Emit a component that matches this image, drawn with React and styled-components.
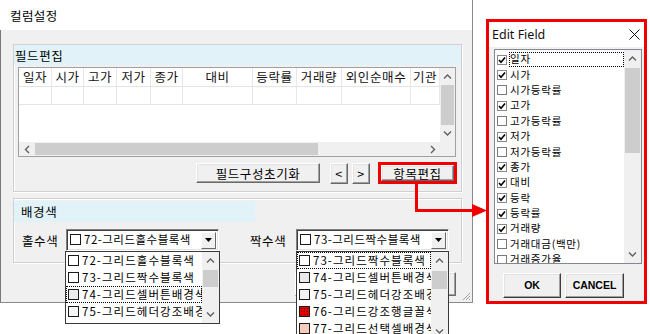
import React from "react";
import styled, { createGlobalStyle } from "styled-components";

const GlobalStyle = createGlobalStyle`
  html, body { margin: 0; padding: 0; background: #fff; }
  body {
    font-family: "Noto Sans CJK KR", "Noto Sans", sans-serif;
    font-size: 12.5px;
    letter-spacing: 0.6px;
    line-height: 1.2;
    color: #000;
  }
  * { box-sizing: border-box; }
`;

const RED = "#f00000";

const Canvas = styled.div`
  position: relative;
  width: 650px;
  height: 334px;
  overflow: hidden;
  display: flex;
  align-items: flex-start;
  background: #fff;
`;

/* ---------- main dialog ---------- */

const MainDialog = styled.div`
  width: 473px;
  height: 303px;
  display: flex;
  flex-direction: column;
  border-right: 1px solid #8a8a8a;
  border-bottom: 1px solid #8a8a8a;
  flex-shrink: 0;
`;

const TitleBar = styled.div`
  height: 30px;
  padding-left: 10px;
  display: flex;
  align-items: center;
  background: #fff;
  letter-spacing: 0.4px;
`;

const Body = styled.div`
  position: relative;
  flex: 1;
  background: #f0f0f0;
  border-left: 1px solid #7a7a7a;
  padding: 14px 10px 0 12px;
`;

const Group = styled.div`
  height: ${(p) => p.$height}px;
  margin-top: ${(p) => p.$top || 0}px;
  display: flex;
  flex-direction: column;
  border: 1px solid #d0d0d0;
  box-shadow: inset 1px 1px 0 #fff, 1px 1px 0 #fff;
`;

const Band = styled.div`
  height: ${(p) => p.$height}px;
  width: ${(p) => (p.$width ? `${p.$width}px` : "auto")};
  margin-top: ${(p) => p.$top || 0}px;
  padding-left: ${(p) => p.$indent}px;
  display: flex;
  align-items: center;
  background: #e1f3f8;
`;

const GridBox = styled.div`
  margin: 2px 5px 0 4px;
  height: 90px;
  border: 1px solid #a0a0a0;
  background: #fff;
  display: grid;
  grid-template-columns: 1fr 15px;
  grid-template-rows: 1fr 14px;
`;

const Table = styled.div`
  overflow: hidden;
`;

const Row = styled.div`
  display: flex;
  height: ${(p) => p.$height}px;
  border-bottom: 1px solid #e4e4e4;
`;

const Cell = styled.div`
  flex: 0 0 ${(p) => p.$w}px;
  border-right: 1px solid #e8e8e8;
  text-align: center;
  line-height: ${(p) => p.$height - 1}px;
  white-space: nowrap;
  overflow: hidden;
  color: #111;
`;

const Corner = styled.div`
  background: #f0f0f0;
`;

const ButtonRow = styled.div`
  display: flex;
  align-items: center;
  justify-content: flex-end;
  height: 22px;
  margin-top: ${(p) => p.$top}px;
  padding-right: ${(p) => p.$right}px;
`;

const ClassicButton = styled.button`
  width: ${(p) => p.$w}px;
  height: ${(p) => p.$h}px;
  margin-left: ${(p) => p.$ml || 0}px;
  padding: 0;
  font: inherit;
  letter-spacing: inherit;
  color: #000;
  background: #f0f0f0;
  border: 1px solid;
  border-color: #fff #696969 #696969 #fff;
  box-shadow: inset -1px -1px 0 #a0a0a0, inset 1px 1px 0 #e3e3e3;
  display: flex;
  align-items: center;
  justify-content: center;
  flex-shrink: 0;
`;

const Highlight = styled.div`
  width: 79px;
  height: 22px;
  margin-left: 8px;
  border: 3px solid ${RED};
  display: flex;
  position: relative;
  z-index: 2;
`;

const FieldRow = styled.div`
  display: flex;
  align-items: center;
  margin-top: 7px;
  padding-left: 8px;
`;

const FieldLabel = styled.div`
  width: ${(p) => p.$w}px;
  margin-left: ${(p) => p.$ml || 0}px;
  flex-shrink: 0;
`;

const Combo = styled.div`
  position: relative;
  width: 153px;
  height: 22px;
  display: flex;
  align-items: center;
  padding: 0 2px 0 3px;
  background: #fff;
  border: 1px solid;
  border-color: #808080 #fff #fff #808080;
  box-shadow: inset 1px 1px 0 #404040, inset -1px -1px 0 #e3e3e3;
  flex-shrink: 0;
  font-size: 11.5px;
  letter-spacing: 0.5px;
`;

const ComboText = styled.div`
  flex: 1;
  min-width: 0;
  display: flex;
  align-items: center;
  white-space: nowrap;
`;

const DropButton = styled.div`
  width: 15px;
  height: 17px;
  background: #f0f0f0;
  border: 1px solid;
  border-color: #fff #696969 #696969 #fff;
  display: flex;
  align-items: center;
  justify-content: center;
  flex-shrink: 0;
`;

const Swatch = styled.span`
  width: 11px;
  height: 11px;
  margin-right: 3px;
  border: 1px solid #1a1a1a;
  background-color: ${(p) => p.$color || "#fff"};
  background-image: ${(p) =>
    p.$dotted ? "radial-gradient(#6a0000 35%, transparent 40%)" : "none"};
  background-size: 3px 3px;
  flex-shrink: 0;
`;

const DropList = styled.div`
  position: absolute;
  top: calc(100% + 1px);
  left: ${(p) => p.$left}px;
  width: ${(p) => p.$w}px;
  height: ${(p) => p.$h}px;
  display: flex;
  background: #fff;
  border: 1px solid #3a3a3a;
  z-index: 5;
  letter-spacing: 1.05px;
`;

const DropItems = styled.div`
  flex: 1;
  min-width: 0;
  overflow: hidden;
`;

const DropItem = styled.div`
  height: 17px;
  display: flex;
  align-items: center;
  padding-left: 2px;
  white-space: nowrap;
  overflow: hidden;
  outline: ${(p) => (p.$focus ? "1px dotted #000" : "none")};
  outline-offset: -1px;
`;

const Grip = styled.svg`
  position: absolute;
  right: 1px;
  bottom: 1px;
`;

/* ---------- scrollbars ---------- */

const VBar = styled.div`
  width: ${(p) => p.$w}px;
  display: flex;
  flex-direction: column;
  background: #f0f0f0;
  flex-shrink: 0;
`;

const HBar = styled.div`
  display: flex;
  background: #f0f0f0;
`;

const BarArrow = styled.div`
  flex: 0 0 ${(p) => p.$size}px;
  display: flex;
  align-items: center;
  justify-content: center;
`;

const VThumb = styled.div`
  margin: ${(p) => p.$offset}px 1px 0;
  height: ${(p) => p.$size}px;
  background: #cdcdcd;
`;

const HThumb = styled.div`
  margin: 1px 0 1px ${(p) => p.$offset}px;
  width: ${(p) => p.$size}px;
  background: #cdcdcd;
`;

const Spacer = styled.div`
  flex: 1;
`;

const Chevron = ({ dir }) => {
  const vertical = dir === "up" || dir === "down";
  const pts = {
    up: "1,5.5 4.5,2 8,5.5",
    down: "1,1.5 4.5,5 8,1.5",
    left: "5,1 1.5,4.5 5,8",
    right: "2,1 5.5,4.5 2,8",
  }[dir];
  return (
    <svg
      width={vertical ? 9 : 7}
      height={vertical ? 7 : 9}
      viewBox={vertical ? "0 0 9 7" : "0 0 7 9"}
    >
      <polyline points={pts} fill="none" stroke="#606060" strokeWidth="1.4" />
    </svg>
  );
};

const VScroll = ({ width = 17, arrow = 17, offset, size }) => (
  <VBar $w={width}>
    <BarArrow $size={arrow}>
      <Chevron dir="up" />
    </BarArrow>
    <VThumb $offset={offset} $size={size} />
    <Spacer />
    <BarArrow $size={arrow}>
      <Chevron dir="down" />
    </BarArrow>
  </VBar>
);

const HScroll = ({ arrow = 16, offset, size }) => (
  <HBar>
    <BarArrow $size={arrow}>
      <Chevron dir="left" />
    </BarArrow>
    <HThumb $offset={offset} $size={size} />
    <Spacer />
    <BarArrow $size={arrow}>
      <Chevron dir="right" />
    </BarArrow>
  </HBar>
);

/* ---------- edit field dialog ---------- */

const EditDialog = styled.div`
  width: 161px;
  height: 285px;
  margin: 19px 0 0 13px;
  border: 3px solid ${RED};
  display: flex;
  flex-direction: column;
  background: #f0f0f0;
  flex-shrink: 0;
`;

const EditTitle = styled.div`
  height: 25px;
  padding: 0 4px 0 3px;
  display: flex;
  align-items: center;
  justify-content: space-between;
  background: #fff;
  font-family: "Noto Sans", "Open Sans", sans-serif;
  font-size: 12.5px;
  letter-spacing: 0;
  color: #111;
`;

const ListBox = styled.div`
  height: 215px;
  margin: 2px 2px 0 5px;
  display: flex;
  background: #fff;
  border: 1px solid #828790;
`;

const ListItems = styled.div`
  flex: 1;
  min-width: 0;
  padding-top: 2px;
  overflow: hidden;
`;

const ListItem = styled.div`
  height: 15.4px;
  display: flex;
  align-items: center;
  padding-left: 2px;
  font-size: 10.5px;
  letter-spacing: 0.75px;
  white-space: nowrap;
`;

const Check = styled.span`
  width: 10px;
  height: 10px;
  border: 1px solid ${(p) => (p.$on ? "#8a8a8a" : "#7a7a7a")};
  background: #fff;
  display: flex;
  align-items: center;
  justify-content: center;
  flex-shrink: 0;
`;

const ItemLabel = styled.span`
  flex: 1;
  margin-left: 2px;
  height: 15px;
  line-height: 14px;
  padding-left: 1px;
  outline: ${(p) => (p.$focus ? "1px dotted #000" : "none")};
  outline-offset: -1px;
`;

const DialogButtons = styled.div`
  display: flex;
  gap: 4px;
  margin-top: 9px;
  padding-left: 14px;
`;

const DialogButton = styled(ClassicButton)`
  font-family: "Liberation Sans", Arial, sans-serif;
  font-size: 10.5px;
  font-weight: 700;
  letter-spacing: 0;
  border-color: #fff #3c3c3c #3c3c3c #fff;
`;

const ArrowOverlay = styled.svg`
  position: absolute;
  left: 0;
  top: 0;
  pointer-events: none;
  z-index: 10;
`;

/* ---------- data ---------- */

const columns = [
  ["일자", 33],
  ["시가", 32],
  ["고가", 33],
  ["저가", 34],
  ["종가", 32],
  ["대비", 70],
  ["등락률", 44],
  ["거래량", 45],
  ["외인순매수", 69],
  ["기관", 29],
];

const oddColors = [
  { label: "72-그리드홀수블록색", color: "#fff" },
  { label: "73-그리드짝수블록색", color: "#fff" },
  { label: "74-그리드셀버튼배경색", color: "#ececec", focus: true },
  { label: "75-그리드헤더강조배경색", color: "#f6f6f6" },
];

const evenColors = [
  { label: "73-그리드짝수블록색", color: "#fff", focus: true },
  { label: "74-그리드셀버튼배경색", color: "#e9e9e9" },
  { label: "75-그리드헤더강조배경색", color: "#f2f2f2" },
  { label: "76-그리드강조행글꼴색", color: "#e00000", dotted: true },
  { label: "77-그리드선택셀배경색", color: "#f7cbbb" },
];

const fields = [
  ["일자", true],
  ["시가", true],
  ["시가등락률", false],
  ["고가", true],
  ["고가등락률", false],
  ["저가", true],
  ["저가등락률", false],
  ["종가", true],
  ["대비", true],
  ["등락", true],
  ["등락률", true],
  ["거래량", true],
  ["거래대금(백만)", false],
  ["거래증가율", false],
];

const DownTriangle = () => (
  <svg width="7" height="4" viewBox="0 0 7 4">
    <polygon points="0,0 7,0 3.5,4" fill="#000" />
  </svg>
);

const ColorCombo = ({ value, items, list }) => (
  <Combo>
    <ComboText>
      <Swatch />
      {value}
    </ComboText>
    <DropButton>
      <DownTriangle />
    </DropButton>
    <DropList $left={list.left} $w={list.width} $h={list.height}>
      <DropItems>
        {items.map((it) => (
          <DropItem key={it.label} $focus={it.focus}>
            <Swatch $color={it.color} $dotted={it.dotted} />
            {it.label}
          </DropItem>
        ))}
      </DropItems>
      <VScroll width={17} arrow={17} offset={list.thumbOffset} size={list.thumbSize} />
    </DropList>
  </Combo>
);

const App = () => (
  <Canvas>
    <GlobalStyle />

    <MainDialog>
      <TitleBar>컬럼설정</TitleBar>
      <Body>
        <Group $height={148}>
          <Band $height={20} $indent={1}>
            필드편집
          </Band>
          <GridBox>
            <Table>
              <Row $height={19}>
                {columns.map(([name, w]) => (
                  <Cell key={name} $w={w} $height={19}>
                    {name}
                  </Cell>
                ))}
              </Row>
              <Row $height={18}>
                {columns.map(([name, w]) => (
                  <Cell key={name} $w={w} $height={18} />
                ))}
              </Row>
            </Table>
            <VScroll width={15} arrow={17} offset={0} size={40} />
            <HScroll arrow={16} offset={0} size={283} />
            <Corner />
          </GridBox>
          <ButtonRow $top={5} $right={4}>
            <ClassicButton $w={124} $h={20}>
              필드구성초기화
            </ClassicButton>
            <ClassicButton $w={18} $h={21} $ml={10}>
              &lt;
            </ClassicButton>
            <ClassicButton $w={18} $h={21} $ml={4}>
              &gt;
            </ClassicButton>
            <Highlight>
              <ClassicButton $w={73} $h={16}>
                항목편집
              </ClassicButton>
            </Highlight>
          </ButtonRow>
        </Group>

        <Group $height={65} $top={6}>
          <Band $height={21} $width={241} $top={2} $indent={7}>
            배경색
          </Band>
          <FieldRow>
            <FieldLabel $w={44}>홀수색</FieldLabel>
            <ColorCombo
              value="72-그리드홀수블록색"
              items={oddColors}
              list={{ left: -2, width: 155, height: 73, thumbOffset: 1, thumbSize: 17 }}
            />
            <FieldLabel $w={46} $ml={31}>
              짝수색
            </FieldLabel>
            <ColorCombo
              value="73-그리드짝수블록색"
              items={evenColors}
              list={{ left: -1, width: 153, height: 90, thumbOffset: 2, thumbSize: 18 }}
            />
          </FieldRow>
        </Group>

        {/* dialog buttons, almost fully covered by the open colour list */}
        <ButtonRow $top={10} $right={6}>
          <ClassicButton $w={78} $h={24} />
          <ClassicButton $w={78} $h={24} $ml={5} />
        </ButtonRow>

        <Grip width="9" height="9" viewBox="0 0 9 9">
          <path d="M8 1 L1 8 M8 4 L4 8 M8 7 L7 8" stroke="#a0a0a0" strokeWidth="1" />
        </Grip>
      </Body>
    </MainDialog>

    <EditDialog>
      <EditTitle>
        Edit Field
        <svg width="11" height="11" viewBox="0 0 11 11">
          <path d="M0.5 0.5 L10.5 10.5 M10.5 0.5 L0.5 10.5" stroke="#111" strokeWidth="1" />
        </svg>
      </EditTitle>
      <ListBox>
        <ListItems>
          {fields.map(([name, on], i) => (
            <ListItem key={name}>
              <Check $on={on}>
                {on && (
                  <svg width="8" height="8" viewBox="0 0 8 8">
                    <polyline points="1,4 3,6.3 7,1.5" fill="none" stroke="#000" strokeWidth="1.6" />
                  </svg>
                )}
              </Check>
              <ItemLabel $focus={i === 0}>{name}</ItemLabel>
            </ListItem>
          ))}
        </ListItems>
        <VScroll width={17} arrow={17} offset={1} size={85} />
      </ListBox>
      <DialogButtons>
        <DialogButton $w={58} $h={25}>
          OK
        </DialogButton>
        <DialogButton $w={59} $h={25}>
          CANCEL
        </DialogButton>
      </DialogButtons>
    </EditDialog>

    <ArrowOverlay width="650" height="334" viewBox="0 0 650 334">
      <path d="M416.5 183 V210.5 H475" fill="none" stroke={RED} strokeWidth="3" />
      <polygon points="472,204 487,210.5 472,217" fill={RED} />
    </ArrowOverlay>
  </Canvas>
);

export default App;
